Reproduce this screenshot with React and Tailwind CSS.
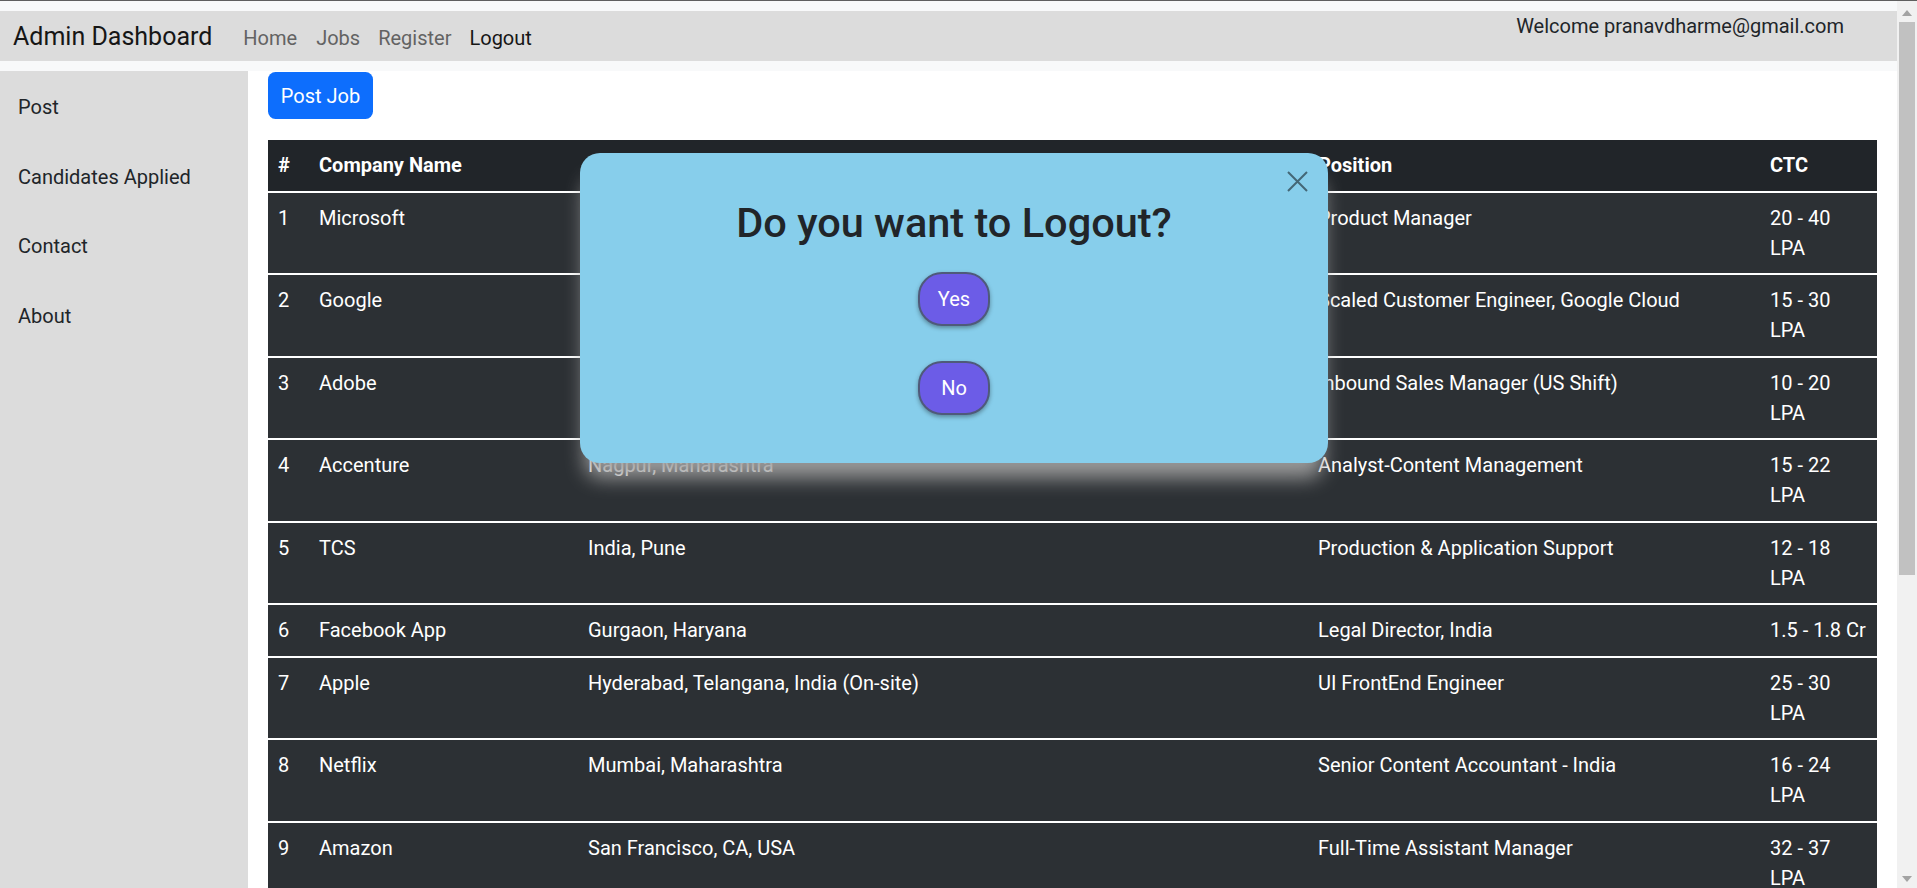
import React from "react";

const rows = [
  ["1", "Microsoft", "Hyderabad, Telangana", "Product Manager", "20 - 40", true],
  ["2", "Google", "Bengaluru, Karnataka", "Scaled Customer Engineer, Google Cloud", "15 - 30", true],
  ["3", "Adobe", "Noida, Uttar Pradesh", "Inbound Sales Manager (US Shift)", "10 - 20", true],
  ["4", "Accenture", "Nagpur, Maharashtra", "Analyst-Content Management", "15 - 22", true],
  ["5", "TCS", "India, Pune", "Production & Application Support", "12 - 18", true],
  ["6", "Facebook App", "Gurgaon, Haryana", "Legal Director, India", "1.5 - 1.8 Cr", false],
  ["7", "Apple", "Hyderabad, Telangana, India (On-site)", "UI FrontEnd Engineer", "25 - 30", true],
  ["8", "Netflix", "Mumbai, Maharashtra", "Senior Content Accountant - India", "16 - 24", true],
  ["9", "Amazon", "San Francisco, CA, USA", "Full-Time Assistant Manager", "32 - 37", true],
];

const cell = "align-top text-left px-[10px] pt-[10px] pb-[10.5px] border-b-2 border-white";

export default function App() {
  return (
    <div
      className="relative w-[1917px] h-[888px] overflow-hidden bg-white flex flex-col text-[#212529]"
      style={{ fontFamily: "Roboto, 'Segoe UI', 'Liberation Sans', sans-serif" }}
    >
      <div className="h-px shrink-0 bg-[#5f5f5f]" />
      <div className="flex flex-1 min-h-0">
        <div className="flex-1 min-w-0 flex flex-col">
          <div className="bg-[#f8f9fa] py-[10px] shrink-0">
            <nav className="h-[50px] bg-[#dcdcdc] flex items-start">
              <div className="flex items-baseline pl-[13px] pt-[7px]">
                <span className="text-[25px] leading-[37.5px] text-[#161616]">Admin Dashboard</span>
                <div className="flex items-baseline ml-[21px] text-[20px] leading-[30px]">
                  <span className="px-[10px] text-[#636363]">Home</span>
                  <span className="px-[9px] text-[#636363]">Jobs</span>
                  <span className="px-[9px] text-[#636363]">Register</span>
                  <span className="px-[9px] text-[#161616]">Logout</span>
                </div>
              </div>
              <div className="ml-auto mr-[53px] text-[20px] leading-[30px] text-[#212529]">
                Welcome pranavdharme@gmail.com
              </div>
            </nav>
          </div>
          <div className="flex flex-1 min-h-0">
            <aside className="w-[248px] shrink-0 bg-[#dcdcdc] flex flex-col gap-[39.5px] pt-[21.4px] pl-[18px] text-[20px] leading-[30px] text-[#212529]">
              <span>Post</span>
              <span>Candidates Applied</span>
              <span>Contact</span>
              <span>About</span>
            </aside>
            <main className="flex-1 min-w-0 pl-[20px] pr-[19px] pt-[1px]">
              <button className="w-[105px] h-[47px] rounded-[7.5px] bg-[#0d6efd] text-white text-[20px] leading-[30px] mb-[21px]">
                Post Job
              </button>
              <table className="table-fixed w-[1609px] border-collapse text-white text-[20px] leading-[30px]">
                <colgroup>
                  <col className="w-[41px]" />
                  <col className="w-[269px]" />
                  <col className="w-[730px]" />
                  <col className="w-[452px]" />
                  <col className="w-[117px]" />
                </colgroup>
                <thead>
                  <tr className="bg-[#212529]">
                    <th className={cell + " font-bold"}>#</th>
                    <th className={cell + " font-bold"}>Company Name</th>
                    <th className={cell + " font-bold"}>Location</th>
                    <th className={cell + " font-bold"}>Position</th>
                    <th className={cell + " font-bold"}>CTC</th>
                  </tr>
                </thead>
                <tbody>
                  {rows.map((r) => (
                    <tr key={r[0]} className="bg-[#2c3034]">
                      <td className={cell}>{r[0]}</td>
                      <td className={cell}>{r[1]}</td>
                      <td className={cell}>{r[2]}</td>
                      <td className={cell}>{r[3]}</td>
                      <td className={cell + " whitespace-nowrap"}>
                        {r[5] ? (
                          <>
                            {r[4]}
                            <br />
                            LPA
                          </>
                        ) : (
                          r[4]
                        )}
                      </td>
                    </tr>
                  ))}
                </tbody>
              </table>
            </main>
          </div>
        </div>
        <div className="w-[20px] shrink-0 bg-[#f1f1f1] flex flex-col items-center">
          <svg width="10" height="6" viewBox="0 0 10 6" className="mt-[9px]">
            <path d="M0 6 L5 0 L10 6 Z" fill="#a3a3a3" />
          </svg>
          <div className="mt-[6px] w-[16px] h-[553px] bg-[#c1c1c1]" />
          <div className="flex-1" />
          <svg width="10" height="6" viewBox="0 0 10 6" className="mb-[6px]">
            <path d="M0 0 L5 6 L10 0 Z" fill="#a3a3a3" />
          </svg>
        </div>
      </div>

      <div className="absolute left-[580px] top-[153px] w-[748px] h-[310px] rounded-[20px] bg-[#87ceeb] shadow-[0_20px_20px_-5px_rgba(160,160,160,0.95)] flex flex-col items-center">
        <button className="absolute top-[18px] right-[20px] w-[21px] h-[21px]">
          <svg width="21" height="21" viewBox="0 0 21 21">
            <path d="M1 1 L20 20 M20 1 L1 20" stroke="#446776" strokeWidth="2" />
          </svg>
        </button>
        <h2 className="mt-[45px] text-[41.5px] leading-[49px] font-medium text-[#212529]">Do you want to Logout?</h2>
        <button className="mt-[25px] w-[72px] h-[54px] rounded-[24px] bg-[#6c5ce7] border-2 border-[#4f5a7a] shadow-[0_2px_4px_rgba(0,0,0,0.35)] text-white text-[20px] leading-[30px]">
          Yes
        </button>
        <button className="mt-[35px] w-[72px] h-[54px] rounded-[24px] bg-[#6c5ce7] border-2 border-[#4f5a7a] shadow-[0_2px_4px_rgba(0,0,0,0.35)] text-white text-[20px] leading-[30px]">
          No
        </button>
      </div>
    </div>
  );
}
